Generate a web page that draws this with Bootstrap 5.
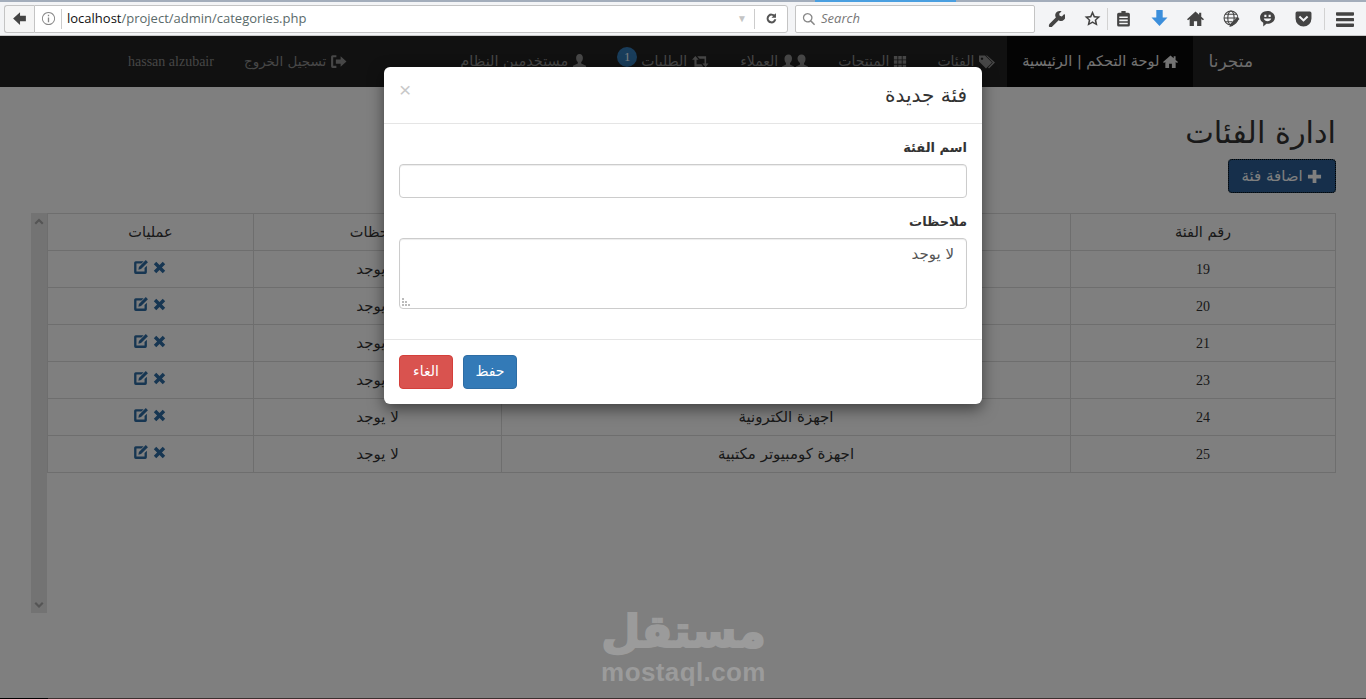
<!DOCTYPE html>
<html lang="ar" dir="rtl">
<head>
<meta charset="UTF-8" />
<title>ادارة الفئات</title>
<link href="https://cdn.jsdelivr.net/npm/bootstrap@5.3.2/dist/css/bootstrap.min.css" rel="stylesheet" />
<style>
html, body { height: 699px; overflow: hidden; }
body { font-family: "DejaVu Sans", sans-serif; font-size: 14px; color: #333; background: #fff; }
.ico { width: 1em; height: 1em; fill: currentColor; flex: none; }

/* browser toolbar */
.ff-bar { height: 36px; background: #f3f4f6; border-top: 2px solid #a3adbb; border-bottom: 1px solid #c9c9c9; position: relative; z-index: 1060; font-family: "Open Sans", sans-serif; }
.ff-bar > * { flex: none; }
.ff-progress { position: absolute; top: -2px; left: 815px; width: 141px; height: 2px; background: #4a9fe0; }
.ff-back { width: 30px; height: 28px; margin-left: 4px; border: 1px solid #c4c4c4; border-right: 0; border-radius: 3px 0 0 3px; color: #444; background: #f5f5f5; font-size: 17px; }
.ff-url { width: 754px; height: 28px; border: 1px solid #c4c4c4; border-radius: 0 3px 3px 0; background: #fff; font-size: 13px; }
.ff-info { color: #888; font-size: 15px; margin: 0 5px 0 6px; }
.ff-sep { width: 1px; height: 20px; background: #ccc; }
.ff-host { color: #111; margin-left: 5px; }
.ff-path { color: #5a6a6a; }
.ff-drop { color: #c4c4c4; font-size: 10px; margin: 0 7px 0 auto; }
.ff-reload { color: #555; font-size: 13px; width: 32px; }
.ff-search { width: 240px; height: 28px; margin-left: 7px; border: 1px solid #c4c4c4; border-radius: 2px; background: #fff; color: #777; font-size: 13px; font-style: italic; padding-left: 6px; gap: 5px; }
.ff-search .ico { font-size: 14px; color: #888; }
.ff-tools { margin-left: 3px; color: #444; }
.ff-tool { width: 36px; font-size: 17px; }
.ff-tool-blue { color: #3b8edb; }
.ff-vsep { width: 1px; height: 22px; background: #d2d2d2; margin: 0 -3px; }
.ff-vsep-end { margin: 0 0 0 3px; }
.ff-menu { width: 40px; font-size: 18px; }

/* site navbar */
.site-wrap { height: 663px; position: relative; }
.site-nav { height: 51px; background: #222; padding: 0; flex-wrap: nowrap; justify-content: center; }
.container-site { width: 1170px; padding: 0 0 0 15px; height: 51px; flex: none; }
.site-brand { color: #d8d8d8; font-size: 17px; padding: 0 15px; line-height: 51px; text-decoration: none; }
.site-nav .navbar-nav { padding: 0; }
.site-nav .nav-link { color: #8e8e8e; padding: 0 15px; line-height: 51px; font-size: 14px; white-space: nowrap; display: flex; align-items: center; gap: 4px; }
.site-nav .nav-item.active .nav-link { background: #080808; color: #e6e6e6; }
.site-nav .nav-link .ico { font-size: 15px; }
.site-nav .nav-text-lg { font-size: 14.5px; }
.site-nav .nav-text-sm { font-size: 13.5px; }
.site-nav .nav-link .ico-tags { width: 18px; height: 17px; margin-right: -4px; }
.site-nav .nav-link .ico-grid { width: 14px; height: 14px; }
.site-nav .nav-link .ico-users { width: 26px; height: 17px; }
.site-nav .nav-link .ico-retweet { width: 19px; height: 15px; }
.site-nav .nav-link .ico-out { width: 17px; height: 17px; }
.site-nav .site-user { font-family: "Liberation Serif", serif; font-size: 14px; color: #8c8c8c; }
.nav-count { position: relative; top: -5px; width: 20px; height: 20px; border-radius: 50%; background: #337ab7; color: #fff; font: 12px/20px "Liberation Serif", serif; text-align: center; }

/* page body */
.page-body { padding: 0 30px 0 31px; }
.page-title { font-size: 30.4px; font-weight: 400; margin: 26px 0 0; line-height: 40px; color: #333; }
.add-btn { background: #2c5f96; border: 1px solid #204d74; color: #fff; height: 34px; width: 108px; padding: 0; font-size: 15px; margin-top: 6px; outline: 1px dotted #000; outline-offset: -1px; border-radius: 4px; }
.add-btn:hover { background: #2c5f96; color: #fff; }
.table-zone { height: 400px; margin-top: 20px; }
.cat-table { width: 1289px; flex: none; margin: 0; table-layout: fixed; align-self: flex-start; --bs-table-border-color: #ddd; --bs-table-color: #333; }
.cat-table th, .cat-table td { padding: 8px; height: 37px; line-height: 20px; text-align: center; vertical-align: middle; font-weight: 400; font-size: 15px; border-color: #ddd; }
.cat-table th { font-size: 14.5px; }
.c-num { width: 265px; }
.c-name { width: 569px; }
.c-note { width: 248px; }
.cat-table .num-cell { font-family: "Liberation Serif", serif; font-size: 14px; padding-top: 9px; padding-bottom: 7px; }
.row-icons { color: #2e6da4; gap: 4px; height: 20px; padding: 0 0 4px 0; margin-left: -4px; align-items: center; }
.row-icons .ico-x { width: 13px; height: 13px; }
.row-icons .ico-edit { width: 17px; height: 17px; }
.fake-scroll { width: 16px; background: #e6e6e6; color: #aaa; font-size: 10px; }
.fake-scroll .ico { margin: 3px; }

/* modal, placed below the browser toolbar */
.modal-backdrop.site-shade { position: absolute; top: 0; left: 0; width: 100%; height: 100%; opacity: .5; }
.modal.site-modal { position: absolute; top: 0; left: 0; width: 100%; height: 100%; overflow: hidden; }
.site-modal .modal-dialog { width: 598px; max-width: 598px; margin: 31px auto 0; }
.site-modal .modal-content { border: 0; border-radius: 6px; box-shadow: 0 5px 15px rgba(0,0,0,.5); height: 337px; color: #333; }
.site-modal .modal-header { height: 57px; padding: 15px; border-bottom: 1px solid #e5e5e5; border-radius: 6px 6px 0 0; align-items: flex-start; justify-content: space-between; }
.site-modal .modal-title { font-size: 20px; font-weight: 400; line-height: 26px; margin-top: 0; }
.site-close { background: none; border: 0; padding: 0; color: #c8c8c8; font: 21px/16px "Liberation Sans", sans-serif; }
.site-modal .modal-body { padding: 14px 15px 15px; height: 215px; flex: none; }
.site-modal label { font-weight: 700; font-size: 13px; line-height: 20px; margin-bottom: 6px; display: block; }
.site-modal .form-control { border: 1px solid #ccc; border-radius: 4px; box-shadow: inset 0 1px 1px rgba(0,0,0,.075); height: 34px; font-size: 15px; color: #555; padding: 6px 12px; }
.site-modal textarea.form-control { height: 71px; min-height: 71px; resize: none; padding-top: 4px; }
.field-gap { margin-bottom: 14px; }
.note-box { position: relative; }
.note-grip { position: absolute; left: 3px; bottom: 2px; width: 9px; height: 9px; fill: #bbb; }
.site-modal .modal-footer { height: 65px; border-top: 1px solid #e5e5e5; padding: 15px; justify-content: flex-end; gap: 10px; flex-wrap: nowrap; }
.site-modal .modal-footer .btn { margin: 0; width: 54px; height: 34px; padding: 0 0 2px; font-size: 14px; border-radius: 4px; color: #fff; }
.site-modal .btn-keep { background: #337ab7; border: 1px solid #2e6da4; }
.site-modal .btn-undo { background: #d9534f; border: 1px solid #d43f3a; }

/* watermark */
.mq-mark { position: absolute; left: 601px; top: 570px; width: 165px; z-index: 1070; color: #9b9b9b; text-align: center; pointer-events: none; }
.mq-ar { font: 700 45px/52px "DejaVu Sans", sans-serif; height: 52px; -webkit-text-stroke: 2px #9b9b9b; }
.mq-en { font: 700 26px/29px "Liberation Sans", sans-serif; letter-spacing: .4px; direction: ltr; white-space: nowrap; }
.edge-line { position: absolute; left: 0; right: 0; bottom: 0; height: 1px; z-index: 1070; background: linear-gradient(to right, #000 48px, #3b2f2f 48px); }
</style>
</head>
<body>
<svg class="d-none">
  <symbol id="i-home" viewBox="0 0 16 16"><path d="M8 1.500 0 8.600l1 1.100 1.500-1.300V15h4v-4.500h3V15h4V8.400L15 9.700l1-1.100-2.600-2.300V2.500h-2v2z"/></symbol>
  <symbol id="i-tags" viewBox="0 0 18 16"><path d="M1 2h6l7 7-6 6-7-7zM4 4a1.200 1.200 0 1 0 .01 0z" fill-rule="evenodd"/><path d="m9 2 8 7-6 6-1-1 4.800-5L8 2z"/></symbol>
  <symbol id="i-grid" viewBox="0 0 16 16"><path d="M1 1h4v4H1zM6 1h4v4H6zM11 1h4v4h-4zM1 6h4v4H1zM6 6h4v4H6zM11 6h4v4h-4zM1 11h4v4H1zM6 11h4v4H6zM11 11h4v4h-4z"/></symbol>
  <symbol id="i-users" viewBox="0 0 26 16"><path d="M6.500 1C9 1 10 3 10 5s-1 4-2 4.500V11l4 2v2H0v-2l4-2V9.500C3 9 2.500 7 2.500 5s1.500-4 4-4zM19.500 1c2.500 0 4 2 4 4s-.5 4-1.500 4.500V11l4 2v2H14v-2l4-2V9.500C17 9 15.500 7 15.500 5s1.500-4 4-4z"/></symbol>
  <symbol id="i-retweet" viewBox="0 0 18 16"><path d="M3.500 2 7 6H4.800v5H10l2 2.500H2.500V6H0zM5.500 2.500H15V10h2.500L14.500 14 11 10h2.300V5H8z"/></symbol>
  <symbol id="i-user" viewBox="0 0 16 16"><path d="M8 0c2.500 0 3.600 2 3.600 4.200S10.500 8 9.800 8.600V10l5.200 2.500V16H1v-3.500L6.200 10V8.600C5.500 8 4.400 6.400 4.400 4.200S5.500 0 8 0z"/></symbol>
  <symbol id="i-out" viewBox="0 0 16 16"><path d="M6 2H2.500A1.500 1.500 0 0 0 1 3.500v9A1.500 1.500 0 0 0 2.500 14H6v-2H3V4h3zM10 3l5.500 5-5.500 5V10H5.500V6H10z"/></symbol>
  <symbol id="i-edit" viewBox="0 0 16 16"><path d="M3.500 2H11L8.800 4.200H4.200v7.600h7.600V8.500L14 6.300v6.200a1.500 1.500 0 0 1-1.500 1.500h-9A1.500 1.500 0 0 1 2 12.500v-9A1.500 1.500 0 0 1 3.500 2zM13 1l2 2-6.500 6.500-2.500.5.500-2.500z"/></symbol>
  <symbol id="i-x" viewBox="0 0 16 16"><path d="m4 1 4 4 4-4 3 3-4 4 4 4-3 3-4-4-4 4-3-3 4-4-4-4z"/></symbol>
  <symbol id="i-plus" viewBox="0 0 16 16"><path d="M6 1h4v5h5v4h-5v5H6v-5H1V6h5z"/></symbol>
  <symbol id="i-up" viewBox="0 0 10 10"><path d="M5 2.500 9.500 7 8 8.500l-3-3-3 3L.5 7z"/></symbol>
  <symbol id="i-down" viewBox="0 0 10 10"><path d="M5 8 .5 3.500 2 2l3 3 3-3 1.500 1.500z"/></symbol>
  <symbol id="i-back" viewBox="0 0 16 16"><path d="M8.500 2 2 8l6.500 6V10.500H14v-5H8.500z"/></symbol>
  <symbol id="i-info" viewBox="0 0 16 16"><path d="M8 1a7 7 0 1 0 .01 0zM8 2a6 6 0 1 1-.01 0zM7.300 4h1.400v1.500H7.300zM7.300 7h1.400v5H7.300z" fill-rule="evenodd"/></symbol>
  <symbol id="i-reload" viewBox="0 0 16 16"><path d="M8 2a6 6 0 0 1 3.500 1.200L13.500 1.500V7H8l2-2a3.500 3.500 0 1 0 1.400 4h2.500A6 6 0 1 1 8 2z"/></symbol>
  <symbol id="i-search" viewBox="0 0 16 16"><path d="M6.500 1a5.500 5.500 0 0 1 4.400 8.800l4.100 4.100-1.200 1.200-4.100-4.100A5.500 5.500 0 1 1 6.500 1zm0 1.500a4 4 0 1 0 .01 0z" fill-rule="evenodd"/></symbol>
  <symbol id="i-wrench" viewBox="0 0 16 16"><path d="M11.500 1a4 4 0 0 1 1.300.2L10.500 3.500l.5 2 2 .5 2.300-2.300A4 4 0 0 1 10 9.600L4 15.500a1.500 1.500 0 0 1-3-1.500c0-.4.200-.8.500-1L7.400 7A4 4 0 0 1 11.500 1z"/></symbol>
  <symbol id="i-star" viewBox="0 0 16 16"><path d="m8 .8 2.200 4.800 5.300.6-3.900 3.500 1.100 5.200L8 12.300l-4.700 2.600 1.100-5.200L.5 6.200l5.300-.6zm0 3.400L6.800 7l-3 .3 2.200 2-.6 2.900L8 10.700l2.600 1.500-.6-2.900 2.200-2-3-.3z" fill-rule="evenodd"/></symbol>
  <symbol id="i-clip" viewBox="0 0 16 16"><path d="M6 1h4v1.500h2.500A1.500 1.500 0 0 1 14 4v10a1.500 1.500 0 0 1-1.500 1.500h-9A1.500 1.500 0 0 1 2 14V4a1.500 1.500 0 0 1 1.500-1.500H6zM4 6v1.500h8V6zm0 3v1.500h8V9zm0 3v1.500h8V12z" fill-rule="evenodd"/></symbol>
  <symbol id="i-arrowdown" viewBox="0 0 16 16"><path d="M5 0h6v7h4.500L8 15 .5 7H5z"/></symbol>
  <symbol id="i-globe" viewBox="0 0 16 16"><g fill="none" stroke="currentColor" stroke-width="1"><circle cx="7.500" cy="7.500" r="6.500"/><ellipse cx="7.500" cy="7.500" rx="3" ry="6.500"/><path d="M1 7.500h13M2 4h11M2 11h7"/></g><path d="m13.500 6.500 2 2-6.500 6.500-3 1 1-3z"/></symbol>
  <symbol id="i-smile" viewBox="0 0 16 16"><path d="M8 1c4 0 7 2.700 7 6s-3 6-7 6l-1-.1L4 15.500V12C2.200 11 1 9.200 1 7c0-3.300 3-6 7-6zM5 4.500v2h2v-2zm4 0v2h2v-2zM4.500 8C5 9.800 6.300 10.500 8 10.500S11 9.800 11.500 8z" fill-rule="evenodd"/></symbol>
  <symbol id="i-pocket" viewBox="0 0 16 16"><path d="M2 1.500h12A1.500 1.500 0 0 1 15.500 3v5a7.500 7.500 0 0 1-15 0V3A1.500 1.500 0 0 1 2 1.500zM4.800 5.500 3.500 6.800 8 11l4.500-4.200-1.300-1.300L8 8.500z" fill-rule="evenodd"/></symbol>
  <symbol id="i-menu" viewBox="0 0 16 16"><path d="M1 2h14a1 1 0 0 1 0 3H1a1 1 0 0 1 0-3zM1 7h14a1 1 0 0 1 0 3H1a1 1 0 0 1 0-3zM1 12h14a1 1 0 0 1 0 3H1a1 1 0 0 1 0-3z"/></symbol>
</svg>

<div class="ff-bar d-flex align-items-center" dir="ltr">
  <div class="ff-progress"></div>
  <div class="ff-back d-flex align-items-center justify-content-center"><svg class="ico"><use href="#i-back"/></svg></div>
  <div class="ff-url d-flex align-items-center">
    <svg class="ico ff-info"><use href="#i-info"/></svg>
    <span class="ff-sep"></span>
    <span class="ff-host">localhost</span><span class="ff-path">/project/admin/categories.php</span>
    <span class="ff-drop">▼</span>
    <span class="ff-sep"></span>
    <span class="ff-reload d-flex justify-content-center"><svg class="ico"><use href="#i-reload"/></svg></span>
  </div>
  <div class="ff-search d-flex align-items-center"><svg class="ico"><use href="#i-search"/></svg>Search</div>
  <div class="ff-tools d-flex align-items-center">
    <span class="ff-tool d-flex justify-content-center"><svg class="ico"><use href="#i-wrench"/></svg></span>
    <span class="ff-tool d-flex justify-content-center"><svg class="ico"><use href="#i-star"/></svg></span>
    <span class="ff-vsep"></span>
    <span class="ff-tool d-flex justify-content-center"><svg class="ico"><use href="#i-clip"/></svg></span>
    <span class="ff-tool ff-tool-blue d-flex justify-content-center"><svg class="ico"><use href="#i-arrowdown"/></svg></span>
    <span class="ff-tool d-flex justify-content-center"><svg class="ico"><use href="#i-home"/></svg></span>
    <span class="ff-tool d-flex justify-content-center"><svg class="ico"><use href="#i-globe"/></svg></span>
    <span class="ff-tool d-flex justify-content-center"><svg class="ico"><use href="#i-smile"/></svg></span>
    <span class="ff-tool d-flex justify-content-center"><svg class="ico"><use href="#i-pocket"/></svg></span>
    <span class="ff-vsep ff-vsep-end"></span>
    <span class="ff-menu d-flex justify-content-center"><svg class="ico"><use href="#i-menu"/></svg></span>
  </div>
</div>

<div class="site-wrap">
  <nav class="navbar site-nav">
    <div class="container-site d-flex">
      <a class="site-brand" href="#">متجرنا</a>
      <ul class="navbar-nav flex-row">
        <li class="nav-item active"><a class="nav-link nav-text-lg" href="#"><svg class="ico"><use href="#i-home"/></svg>لوحة التحكم | الرئيسية</a></li>
        <li class="nav-item"><a class="nav-link" href="#"><svg class="ico ico-tags"><use href="#i-tags"/></svg>الفئات</a></li>
        <li class="nav-item"><a class="nav-link" href="#"><svg class="ico ico-grid"><use href="#i-grid"/></svg>المنتجات</a></li>
        <li class="nav-item"><a class="nav-link" href="#"><svg class="ico ico-users"><use href="#i-users"/></svg>العملاء</a></li>
        <li class="nav-item"><a class="nav-link" href="#"><svg class="ico ico-retweet"><use href="#i-retweet"/></svg>الطلبات<span class="nav-count">1</span></a></li>
        <li class="nav-item"><a class="nav-link nav-text-lg" href="#"><svg class="ico"><use href="#i-user"/></svg>مستخدمين النظام</a></li>
      </ul>
      <ul class="navbar-nav flex-row me-auto">
        <li class="nav-item"><a class="nav-link nav-text-sm" href="#"><svg class="ico ico-out"><use href="#i-out"/></svg>تسجيل الخروج</a></li>
        <li class="nav-item"><a class="nav-link site-user" href="#">hassan alzubair</a></li>
      </ul>
    </div>
  </nav>

  <main class="page-body">
    <h1 class="page-title">ادارة الفئات</h1>
    <button type="button" class="btn add-btn"><svg class="ico"><use href="#i-plus"/></svg> اضافة فئة</button>
    <div class="table-zone d-flex">
      <table class="table table-bordered cat-table">
        <colgroup><col class="c-num" /><col class="c-name" /><col class="c-note" /><col /></colgroup>
        <thead>
          <tr><th>رقم الفئة</th><th>اسم الفئة</th><th>ملاحظات</th><th>عمليات</th></tr>
        </thead>
        <tbody>
          <tr><td class="num-cell">19</td><td>اجهزة موبايل</td><td>لا يوجد</td><td><div class="row-icons d-flex justify-content-center"><svg class="ico ico-x"><use href="#i-x"/></svg><svg class="ico ico-edit"><use href="#i-edit"/></svg></div></td></tr>
          <tr><td class="num-cell">20</td><td>اجهزة لابتوب</td><td>لا يوجد</td><td><div class="row-icons d-flex justify-content-center"><svg class="ico ico-x"><use href="#i-x"/></svg><svg class="ico ico-edit"><use href="#i-edit"/></svg></div></td></tr>
          <tr><td class="num-cell">21</td><td>اجهزة طابعات</td><td>لا يوجد</td><td><div class="row-icons d-flex justify-content-center"><svg class="ico ico-x"><use href="#i-x"/></svg><svg class="ico ico-edit"><use href="#i-edit"/></svg></div></td></tr>
          <tr><td class="num-cell">23</td><td>اجهزة شبكات</td><td>لا يوجد</td><td><div class="row-icons d-flex justify-content-center"><svg class="ico ico-x"><use href="#i-x"/></svg><svg class="ico ico-edit"><use href="#i-edit"/></svg></div></td></tr>
          <tr><td class="num-cell">24</td><td>اجهزة الكترونية</td><td>لا يوجد</td><td><div class="row-icons d-flex justify-content-center"><svg class="ico ico-x"><use href="#i-x"/></svg><svg class="ico ico-edit"><use href="#i-edit"/></svg></div></td></tr>
          <tr><td class="num-cell">25</td><td>اجهزة كومبيوتر مكتبية</td><td>لا يوجد</td><td><div class="row-icons d-flex justify-content-center"><svg class="ico ico-x"><use href="#i-x"/></svg><svg class="ico ico-edit"><use href="#i-edit"/></svg></div></td></tr>
        </tbody>
      </table>
      <div class="fake-scroll d-flex flex-column justify-content-between">
        <svg class="ico"><use href="#i-up"/></svg>
        <svg class="ico"><use href="#i-down"/></svg>
      </div>
    </div>
  </main>

  <div class="modal-backdrop site-shade"></div>
  <div class="modal d-block site-modal">
    <div class="modal-dialog">
      <div class="modal-content">
        <div class="modal-header">
          <h4 class="modal-title">فئة جديدة</h4>
          <button type="button" class="site-close">×</button>
        </div>
        <div class="modal-body">
          <div class="field-gap">
            <label for="cat-name">اسم الفئة</label>
            <input id="cat-name" type="text" class="form-control" />
          </div>
          <div>
            <label for="cat-note">ملاحظات</label>
            <div class="note-box">
              <textarea id="cat-note" class="form-control">لا يوجد</textarea>
              <svg class="note-grip" viewBox="0 0 9 9"><path d="M0 0h2v2H0zM0 3h2v2H0zM3 3h2v2H3zM0 6h2v2H0zM3 6h2v2H3zM6 6h2v2H6z"/></svg>
            </div>
          </div>
        </div>
        <div class="modal-footer">
          <button type="button" class="btn btn-keep">حفظ</button>
          <button type="button" class="btn btn-undo">الغاء</button>
        </div>
      </div>
    </div>
  </div>

  <div class="mq-mark">
    <div class="mq-ar">مستقل</div>
    <div class="mq-en">mostaql.com</div>
  </div>
  <div class="edge-line"></div>
</div>
</body>
</html>
